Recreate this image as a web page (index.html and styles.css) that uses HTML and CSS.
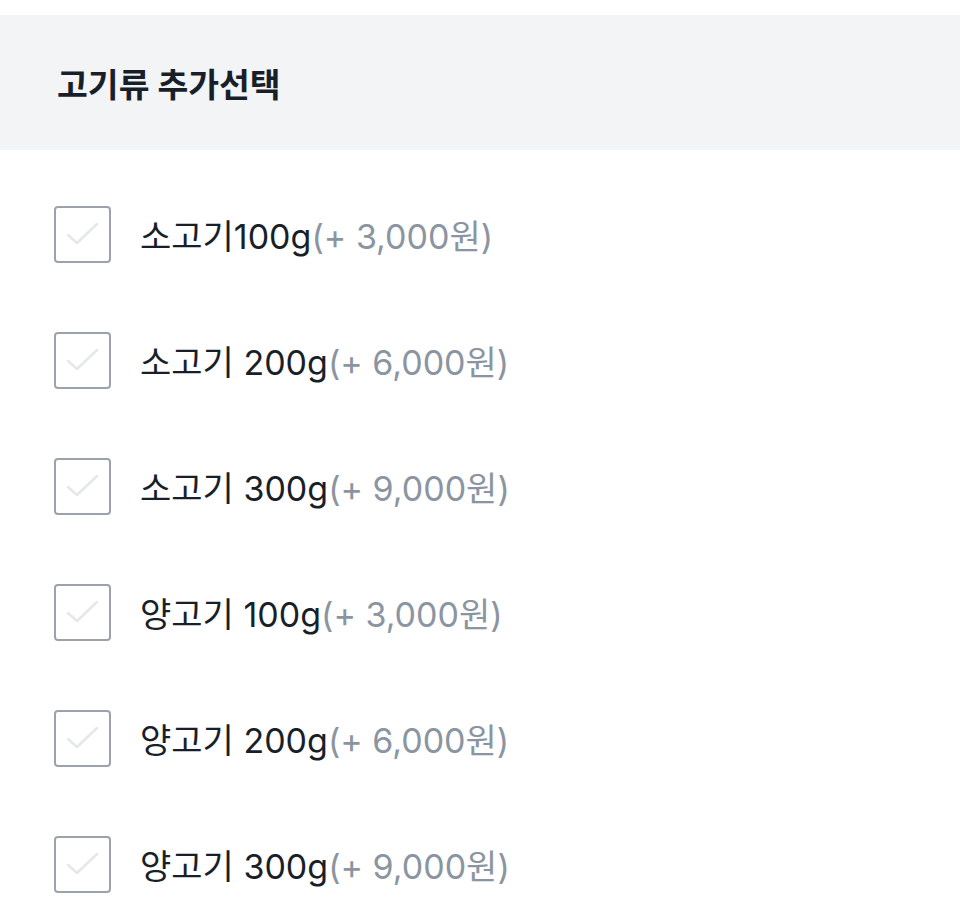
FILE: index.html
```html
<!DOCTYPE html>
<html lang="ko">
<head>
  <meta charset="UTF-8">
  <meta name="viewport" content="width=device-width, initial-scale=1.0">
  <title>고기류 추가선택</title>
  <link rel="stylesheet" href="styles.css">
</head>
<body>
  <div class="section-header">
    <h2>고기류 추가선택</h2>
  </div>

  <ul class="option-list">
    <li class="option">
      <span class="check-box">
        <svg viewBox="0 0 57 57" class="check-mark"><path d="M14 29 L23 37 L43 18"/></svg>
      </span>
      <span class="option-name">소고기100g<span class="option-price">(+ 3,000원)</span></span>
    </li>
    <li class="option">
      <span class="check-box">
        <svg viewBox="0 0 57 57" class="check-mark"><path d="M14 29 L23 37 L43 18"/></svg>
      </span>
      <span class="option-name">소고기 200g<span class="option-price">(+ 6,000원)</span></span>
    </li>
    <li class="option">
      <span class="check-box">
        <svg viewBox="0 0 57 57" class="check-mark"><path d="M14 29 L23 37 L43 18"/></svg>
      </span>
      <span class="option-name">소고기 300g<span class="option-price">(+ 9,000원)</span></span>
    </li>
    <li class="option">
      <span class="check-box">
        <svg viewBox="0 0 57 57" class="check-mark"><path d="M14 29 L23 37 L43 18"/></svg>
      </span>
      <span class="option-name">양고기 100g<span class="option-price">(+ 3,000원)</span></span>
    </li>
    <li class="option">
      <span class="check-box">
        <svg viewBox="0 0 57 57" class="check-mark"><path d="M14 29 L23 37 L43 18"/></svg>
      </span>
      <span class="option-name">양고기 200g<span class="option-price">(+ 6,000원)</span></span>
    </li>
    <li class="option">
      <span class="check-box">
        <svg viewBox="0 0 57 57" class="check-mark"><path d="M14 29 L23 37 L43 18"/></svg>
      </span>
      <span class="option-name">양고기 300g<span class="option-price">(+ 9,000원)</span></span>
    </li>
  </ul>
</body>
</html>
```

FILE: styles.css
```css
body {
  margin: 0;
  background-color: #ffffff;
  font-family: Inter, 'Noto Sans CJK KR', sans-serif;
  color: #191f28;
}

.section-header {
  margin-top: 15px;
  height: 135px;
  padding-left: 57px;
  background-color: #f2f4f6;
  display: flex;
  align-items: center;
}

.section-header h2 {
  margin: 0;
  font-size: 33.5px;
  font-weight: 700;
  color: #191f28;
}

.option-list {
  list-style: none;
  margin: 0;
  padding: 21px 0 0 54px;
}

.option {
  height: 126px;
  display: flex;
  align-items: center;
}

.check-box {
  width: 57px;
  height: 57px;
  box-sizing: border-box;
  border: 2px solid #9ba2ab;
  border-radius: 4px;
  flex-shrink: 0;
  position: relative;
}

.check-mark {
  position: absolute;
  left: -2px;
  top: -2px;
  width: 57px;
  height: 57px;
  fill: none;
  stroke: #e5e8eb;
  stroke-width: 2.5;
  stroke-linecap: round;
  stroke-linejoin: round;
}

.option-name {
  margin-left: 29px;
  font-size: 34px;
  color: #191f28;
}

.option-price {
  color: #8b95a1;
}
```
